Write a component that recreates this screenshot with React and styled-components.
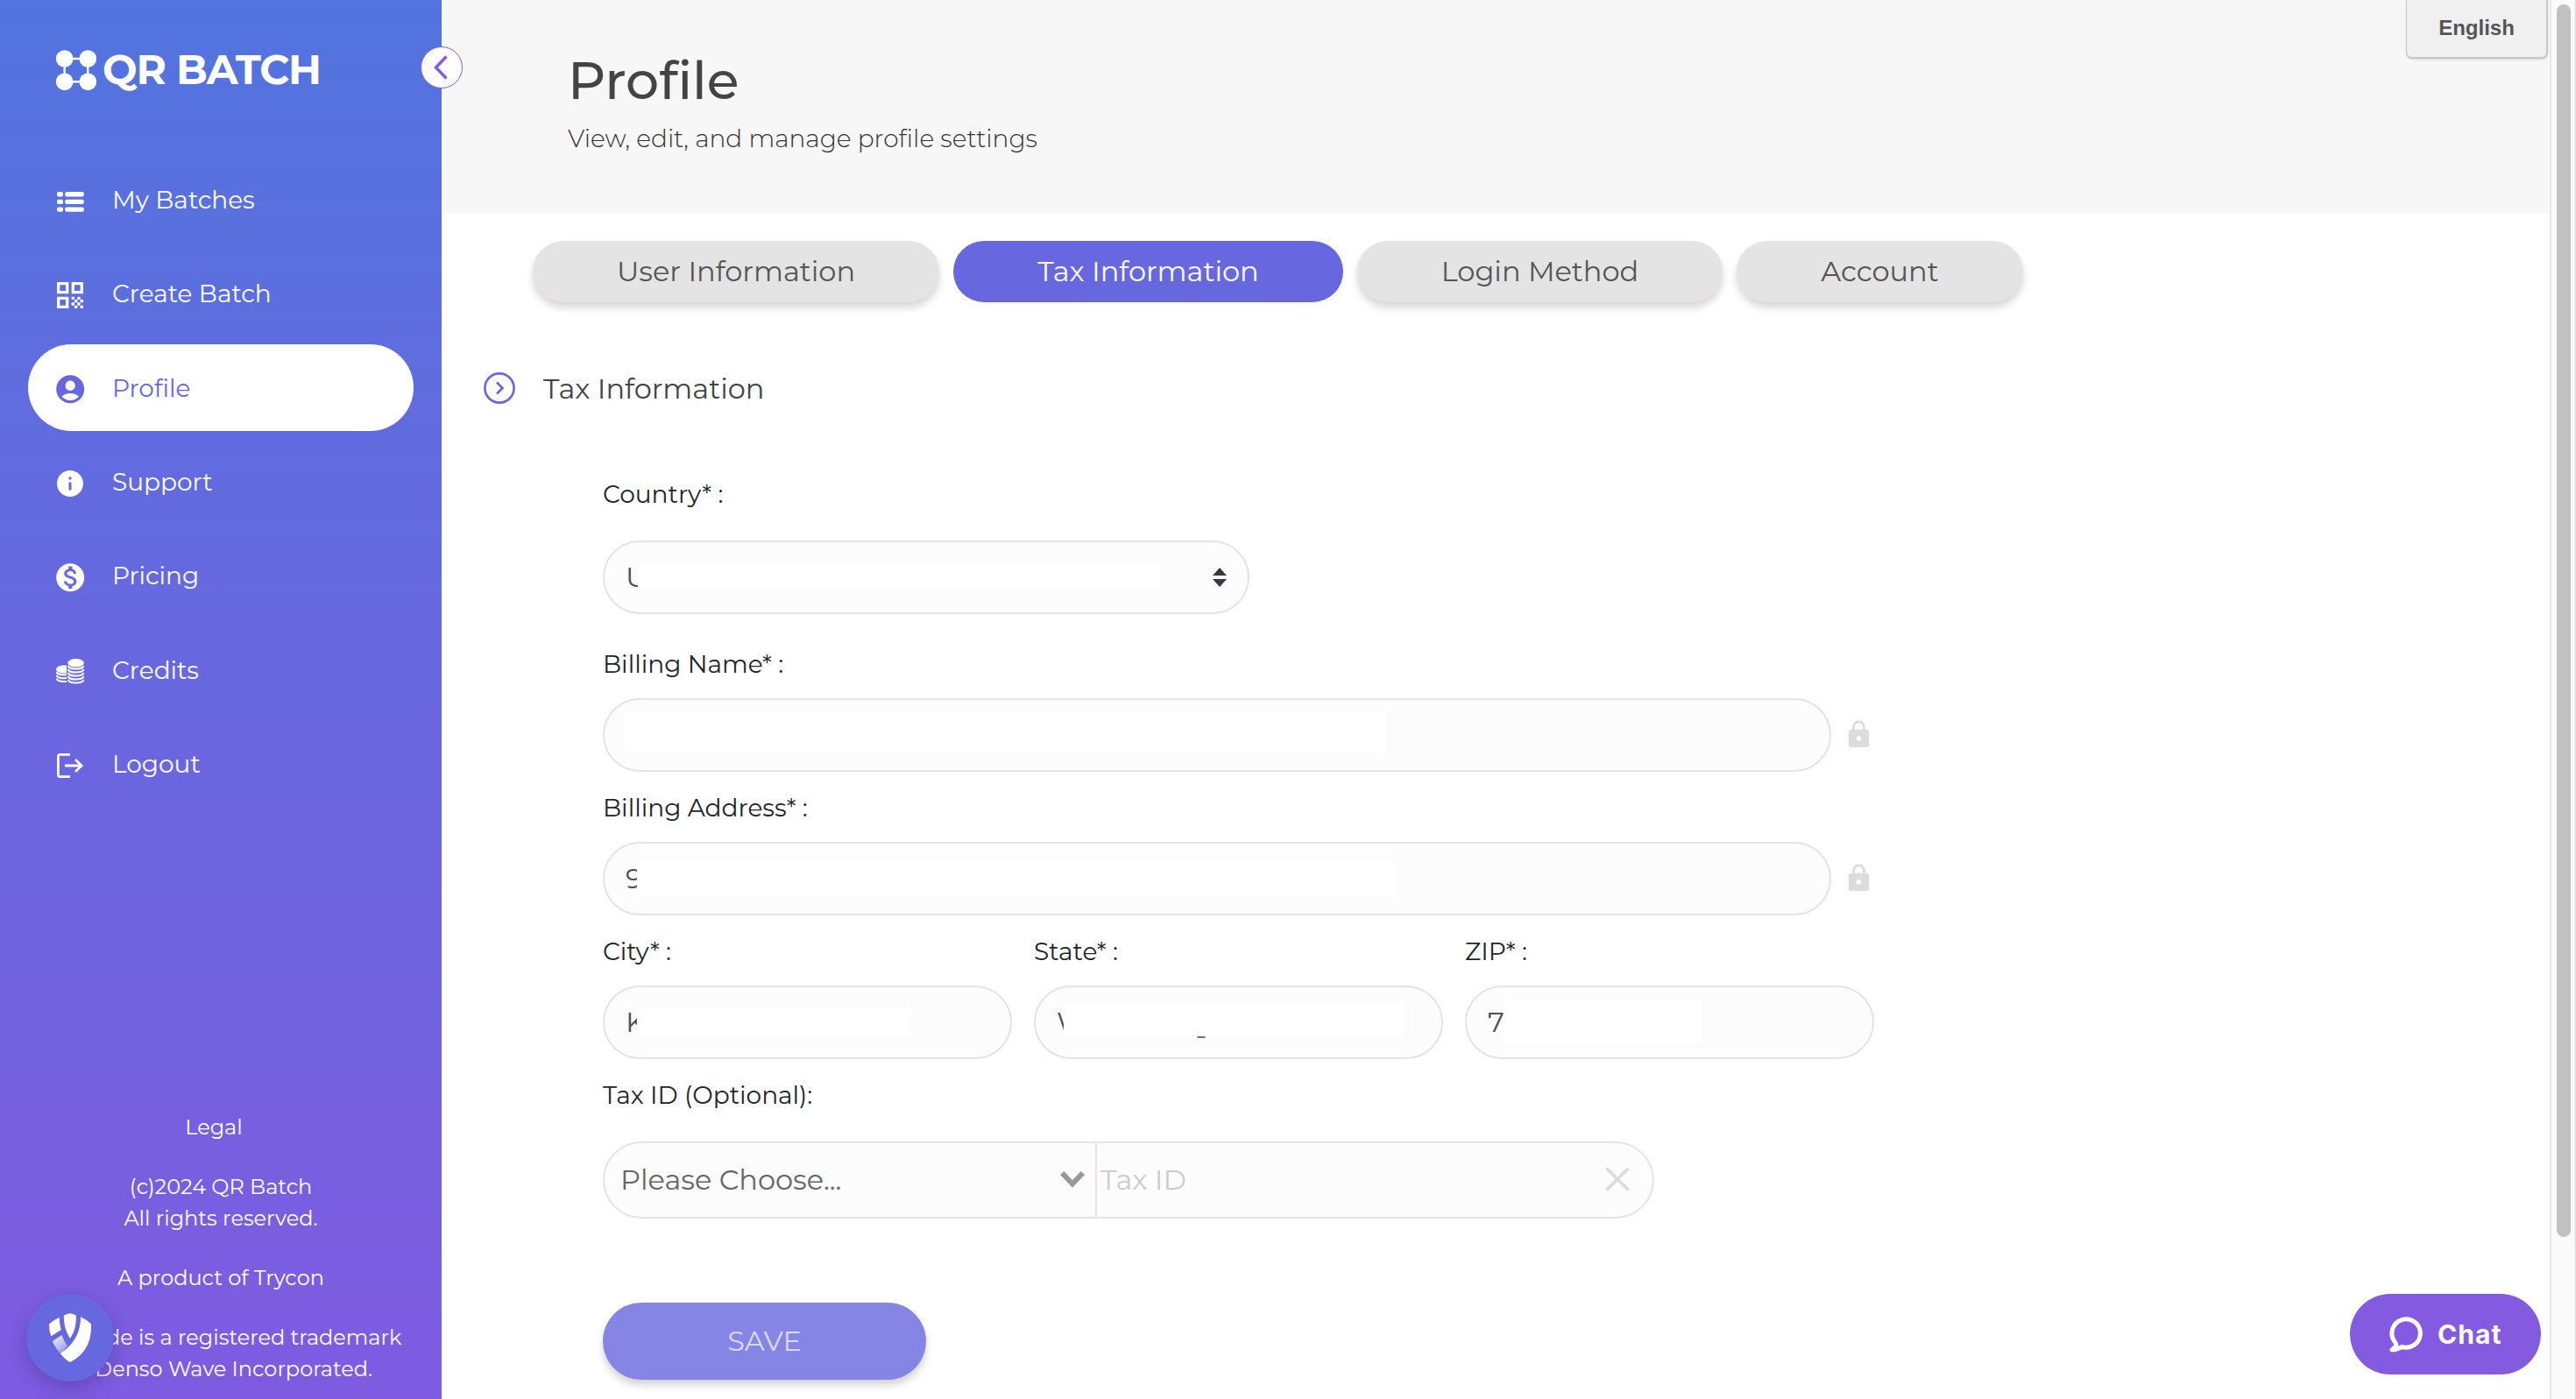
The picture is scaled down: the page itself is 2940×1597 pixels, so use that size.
import React, { useState } from 'react';
import styled, { createGlobalStyle } from 'styled-components';
import { MdQrCode, MdAccountCircle, MdInfo, MdMonetizationOn, MdLock } from 'react-icons/md';

const GlobalStyle = createGlobalStyle`
  * {
    box-sizing: border-box;
  }
  body {
    margin: 0;
    font-family: Montserrat, Inter, sans-serif;
    background-color: #fff;
  }
  button, input {
    font-family: inherit;
  }
`;

const Page = styled.div`
  position: relative;
  display: flex;
  height: 1597px;
  overflow: hidden;
`;

const Sidebar = styled.aside`
  position: relative;
  display: flex;
  flex-direction: column;
  width: 504px;
  padding: 56px 32px 0;
  color: #fff;
  background: linear-gradient(#5274df 0%, #626bdf 33%, #7e5be0 100%);
`;

const Logo = styled.div`
  display: flex;
  align-items: center;
  height: 48px;
  padding-left: 32px;
`;

const LogoText = styled.span`
  margin: 0 0 1px 7px;
  font-size: 47px;
  font-weight: 700;
  line-height: 48px;
  letter-spacing: -1.2px;
`;

const CollapseButton = styled.button`
  position: absolute;
  top: 53px;
  right: -24px;
  z-index: 2;
  display: flex;
  align-items: center;
  justify-content: center;
  width: 48px;
  height: 48px;
  padding: 0 2px 0 0;
  border: 1px solid #845be0;
  border-radius: 50%;
  background-color: #fff;
`;

const Nav = styled.nav`
  display: flex;
  flex-direction: column;
  gap: 8.3px;
  margin-top: 74.6px;
`;

const NavItem = styled.a`
  display: flex;
  align-items: center;
  gap: 28px;
  height: 99px;
  padding-left: 28px;
  border-radius: 50px;
  font-size: 28px;
  color: ${(props) => (props.$active ? '#6768df' : '#fff')};
  background-color: ${(props) => (props.$active ? '#fff' : 'transparent')};
`;

const NavIcon = styled.span`
  display: flex;
  align-items: center;
  justify-content: center;
  width: 40px;
  height: 40px;
  margin-top: 4px;
`;

const Footer = styled.footer`
  display: flex;
  flex-direction: column;
  gap: 32px;
  margin: 348px -20px 0;
  font-size: 24px;
  line-height: 36px;
  text-align: center;
  white-space: nowrap;

  p {
    margin: 0;
  }
  p:first-child {
    padding-right: 16px;
  }
`;

const PrivacyBadge = styled.button`
  position: absolute;
  left: 30px;
  bottom: 20px;
  display: flex;
  align-items: center;
  justify-content: center;
  width: 100px;
  height: 100px;
  padding: 0;
  border: none;
  border-radius: 50%;
  background-color: #6768df;
  box-shadow: 0 8px 20px rgba(60, 40, 120, 0.35);
`;

const Main = styled.main`
  flex: 1;
  background-color: #fff;
`;

const Header = styled.header`
  height: 243px;
  padding: 56px 0 0 144px;
  color: #444;
  background-color: #f7f7f7;
`;

const Title = styled.h1`
  margin: 0;
  font-size: 60px;
  font-weight: 500;
  line-height: 72px;
`;

const Subtitle = styled.p`
  margin: 13px 0 0;
  font-size: 28px;
  font-weight: 300;
  line-height: 34px;
  color: #333;
`;

const Tabs = styled.div`
  display: flex;
  gap: 16px;
  padding: 32px 0 0 104px;
`;

const Tab = styled.button`
  width: ${(props) => props.$width}px;
  height: 70px;
  padding: 0 0 2px;
  border: none;
  border-radius: 35px;
  font-size: 32px;
  color: ${(props) => (props.$active ? '#fff' : '#555')};
  background-color: ${(props) => (props.$active ? '#6768df' : '#e4e4e4')};
  box-shadow: ${(props) => (props.$active ? 'none' : '0 6px 8px rgba(40, 20, 20, 0.18)')};
`;

const SectionTitle = styled.h2`
  display: flex;
  align-items: center;
  gap: 32px;
  height: 40px;
  margin: 78px 0 0 48px;
  font-size: 32px;
  font-weight: 400;
  color: #444;
`;

const Form = styled.form`
  display: flex;
  flex-direction: column;
  padding: 84px 0 0 184px;
`;

const Field = styled.div`
  display: flex;
  flex-direction: column;
  gap: ${(props) => props.$gap || 20}px;
  margin-bottom: ${(props) => props.$bottom || 0}px;
`;

const Label = styled.label`
  height: 34px;
  font-size: 28px;
  line-height: 34px;
  color: #212529;
`;

const InputRow = styled.div`
  display: flex;
  align-items: center;
  gap: 14px;
  color: #dcdcdc;

  svg {
    margin-bottom: 1px;
  }
`;

const InputBox = styled.div`
  position: relative;
  display: flex;
  align-items: center;
  width: ${(props) => props.$width}px;
  height: 84px;
  padding: 0 24px 1px;
  border: 2px solid #e4e4e4;
  border-radius: 42px;
  font-size: 32px;
  color: #495057;
  background-color: #fcfcfc;
`;

// Blank strip that covers the stored value
const Redaction = styled.span`
  position: absolute;
  left: ${(props) => props.$left}px;
  top: ${(props) => props.$top}px;
  width: ${(props) => props.$width}px;
  height: ${(props) => props.$height}px;
  background-color: #fff;
`;

const Descender = styled.span`
  position: absolute;
  left: 184px;
  top: 56px;
  width: 10px;
  height: 2px;
  border-radius: 0 0 5px 5px;
  background-color: #6b7177;
`;

const SelectArrows = styled.svg`
  margin-left: auto;
`;

const Columns = styled.div`
  display: flex;
  gap: 25px;
`;

const TaxIdBox = styled.div`
  display: flex;
  width: 1200px;
  height: 88px;
  border: 2px solid #e4e4e4;
  border-radius: 44px;
  background-color: #fcfcfc;
`;

const TaxType = styled.div`
  display: flex;
  align-items: center;
  justify-content: space-between;
  width: 562px;
  padding: 0 12px 2px 18px;
  border-right: 2px solid #e4e4e4;
  font-size: 32px;
  color: #666;
`;

const TaxIdInput = styled.div`
  display: flex;
  flex: 1;
  align-items: center;
  justify-content: space-between;
  padding: 0 26px 2px 4px;
  font-size: 32px;
  color: #ccc;
`;

const SaveButton = styled.button`
  width: 369px;
  height: 88px;
  margin-top: 96px;
  padding: 0 0 2px;
  border: none;
  border-radius: 44px;
  font-size: 32px;
  color: #dadaf7;
  background-color: #8585e5;
  box-shadow: 0 6px 8px rgba(40, 20, 20, 0.2);
`;

const Language = styled.div`
  position: absolute;
  top: 0;
  right: 32px;
  width: 162px;
  height: 67px;
  border: solid #c8c8c8;
  border-width: 0 2px 2px 1px;
  border-radius: 0 0 7px 7px;
  font-family: 'Liberation Sans', Arial, sans-serif;
  font-size: 24px;
  font-weight: 700;
  line-height: 64px;
  text-align: center;
  color: #555;
  background-color: #f0f0f0;
  box-shadow: 0 1px 2px rgba(0, 0, 0, 0.15);
`;

const ChatButton = styled.button`
  position: absolute;
  right: 40px;
  bottom: 28px;
  display: flex;
  align-items: center;
  gap: 16px;
  width: 218px;
  height: 92px;
  padding: 0 0 0 44px;
  border: none;
  border-radius: 46px;
  font-family: Inter, sans-serif;
  font-size: 30px;
  font-weight: 700;
  letter-spacing: 1.1px;
  color: #fff;
  background-color: #845be0;
`;

const Scrollbar = styled.div`
  width: 30px;
  padding: 5px 4px 0 6px;
  border: solid #e9e9e9;
  border-width: 0 2px;
  background-color: #fafafa;
`;

const Thumb = styled.div`
  width: 16px;
  height: 1407px;
  border-radius: 8px;
  background-color: #c1c1c1;
`;

const LogoIcon = () => (
  <svg width="46" height="46" viewBox="0 0 46 46" fill="currentColor">
    <circle cx="9.7" cy="10" r="9.8" />
    <circle cx="36.3" cy="10" r="9.8" />
    <circle cx="9.7" cy="36.3" r="9.8" />
    <circle cx="36.3" cy="36.3" r="9.8" />
    <path d="M9.7 10H36.3V36.3H9.7Z" fill="none" stroke="currentColor" strokeWidth="2.4" />
  </svg>
);

const ListIcon = () => (
  <svg width="31" height="23" viewBox="0 0 31 23" fill="currentColor">
    {[0, 8.7, 17.4].map((y) => (
      <g key={y}>
        <rect x="0" y={y} width="7" height="5.4" rx="2" />
        <rect x="9.2" y={y} width="21.6" height="5.4" rx="2" />
      </g>
    ))}
  </svg>
);

const CoinsIcon = () => (
  <svg width="32" height="29" viewBox="0 0 32 29" fill="currentColor">
    <ellipse cx="22.6" cy="4.8" rx="9.3" ry="4.8" />
    <path d="M12 7.6C4.5 6.7 0 9.5 0 12.2C0 14.8 5 17 12 16.4Z" />
    <g fill="none" stroke="currentColor" strokeWidth="2">
      {[9, 13, 17, 21, 24.8].map((y) => (
        <path key={y} d={`M13.4 ${y - 1}C15.5 ${y + 3.8} 29.7 ${y + 3.8} 31.8 ${y - 1}`} />
      ))}
      {[17, 20.9, 24.7].map((y) => (
        <path key={y} d={`M0.3 ${y - 2}C1.5 ${y + 0.6} 6 ${y + 1.7} 12 ${y + 1.2}`} />
      ))}
    </g>
  </svg>
);

const LogoutIcon = () => (
  <svg width="30" height="28" viewBox="0 0 30 28" fill="none" stroke="currentColor" strokeWidth="2.8">
    <path d="M15 1.4H3.4Q1.4 1.4 1.4 3.4V24.6Q1.4 26.6 3.4 26.6H15" />
    <path d="M9 14H27M21 7L28 14L21 21" />
  </svg>
);

const ShieldIcon = () => (
  <svg width="48" height="56" viewBox="0 0 48 56" fill="#fff">
    <defs>
      <linearGradient id="fold" x1="0" y1="0" x2="0.5" y2="1">
        <stop offset="0" stopColor="#fff" stopOpacity="0.95" />
        <stop offset="1" stopColor="#fff" stopOpacity="0.35" />
      </linearGradient>
    </defs>
    <path d="M0 12.5Q5 7.5 11.9 5Q11.6 12.5 13.8 19L2.2 26.3Q0 20 0 12.5Z" />
    <path d="M16.9 2.7Q24 -2.4 30.9 2.7Q31.5 18 24 28.7Q16.5 18 16.9 2.7Z" />
    <path d="M36.1 4.3Q42.5 7.3 47.9 12.2Q49.5 43 24 56Q17.5 52.5 12.9 46Q36 31 36.1 4.3Z" />
    <path d="M4 32L14.4 25Q17 32 20.8 37Q18 42 12.9 46Q7 40 4 32Z" fill="url(#fold)" />
  </svg>
);

const ChatIcon = () => (
  <svg width="40" height="42" viewBox="0 0 40 42" fill="none" stroke="#fff" strokeWidth="5" strokeLinejoin="round">
    <path d="M14.5 35.2A16.2 16.2 0 1 0 7 29.5Q9.8 33 7.8 35.5L4 38.8Q8 39.3 14.5 35.8Q17 36.2 20 36.2" />
  </svg>
);

const navItems = [
  { label: 'My Batches', icon: <ListIcon /> },
  { label: 'Create Batch', icon: <MdQrCode size={40} /> },
  { label: 'Profile', icon: <MdAccountCircle size={38.4} /> },
  { label: 'Support', icon: <MdInfo size={36} /> },
  { label: 'Pricing', icon: <MdMonetizationOn size={38.4} /> },
  { label: 'Credits', icon: <CoinsIcon /> },
  { label: 'Logout', icon: <LogoutIcon /> },
];

const tabs = [
  { label: 'User Information', width: 464 },
  { label: 'Tax Information', width: 445 },
  { label: 'Login Method', width: 417 },
  { label: 'Account', width: 327 },
];

export default function App() {
  const [activeTab, setActiveTab] = useState('Tax Information');

  return (
    <Page>
      <GlobalStyle />
      <Sidebar>
        <Logo>
          <LogoIcon />
          <LogoText>QR BATCH</LogoText>
        </Logo>
        <CollapseButton aria-label="Collapse menu">
          <svg width="16" height="28" viewBox="0 0 16 28" fill="none" stroke="#845be0" strokeWidth="3.4">
            <path d="M14.5 1.5L2.5 14L14.5 26.5" />
          </svg>
        </CollapseButton>
        <Nav>
          {navItems.map((item) => (
            <NavItem key={item.label} $active={item.label === 'Profile'}>
              <NavIcon>{item.icon}</NavIcon>
              {item.label}
            </NavItem>
          ))}
        </Nav>
        <Footer>
          <p>Legal</p>
          <p>(c)2024 QR Batch<br />All rights reserved.</p>
          <p>A product of Trycon</p>
          <p>QR Code is a registered trademark<br />of Denso Wave Incorporated.</p>
        </Footer>
        <PrivacyBadge aria-label="Privacy settings">
          <ShieldIcon />
        </PrivacyBadge>
      </Sidebar>

      <Main>
        <Header>
          <Title>Profile</Title>
          <Subtitle>View, edit, and manage profile settings</Subtitle>
        </Header>
        <Tabs>
          {tabs.map((tab) => (
            <Tab
              key={tab.label}
              $width={tab.width}
              $active={tab.label === activeTab}
              onClick={() => setActiveTab(tab.label)}
            >
              {tab.label}
            </Tab>
          ))}
        </Tabs>

        <SectionTitle>
          <svg width="36" height="36" viewBox="0 0 36 36" fill="none" stroke="#6768df" strokeWidth="2.6">
            <circle cx="18" cy="18" r="16.6" />
            <path d="M15 11.5L21.5 18L15 24.5" />
          </svg>
          Tax Information
        </SectionTitle>

        <Form>
          <Field $gap={36} $bottom={40}>
            <Label>Country* :</Label>
            <InputBox $width={738}>
              U
              <Redaction $left={38} $top={26} $width={596} $height={27} />
              <SelectArrows width="16" height="22" viewBox="0 0 16 22" fill="#343a40">
                <path d="M0 9L8 0L16 9ZM0 13H16L8 22Z" />
              </SelectArrows>
            </InputBox>
          </Field>
          <Field $gap={22} $bottom={24}>
            <Label>Billing Name* :</Label>
            <InputRow>
              <InputBox $width={1402}>
                <Redaction $left={23} $top={13} $width={869} $height={46} />
              </InputBox>
              <MdLock size={35} />
            </InputRow>
          </Field>
          <Field $gap={22} $bottom={24}>
            <Label>Billing Address* :</Label>
            <InputRow>
              <InputBox $width={1402}>
                9
                <Redaction $left={37} $top={20} $width={865} $height={41} />
              </InputBox>
              <MdLock size={35} />
            </InputRow>
          </Field>
          <Columns>
            <Field $gap={22} $bottom={24}>
              <Label>City* :</Label>
              <InputBox $width={467}>
                K
                <Redaction $left={37} $top={22} $width={312} $height={35} />
              </InputBox>
            </Field>
            <Field $gap={22} $bottom={24}>
              <Label>State* :</Label>
              <InputBox $width={467}>
                W
                <Redaction $left={32} $top={17} $width={388} $height={39} />
                <Descender />
              </InputBox>
            </Field>
            <Field $gap={22} $bottom={24}>
              <Label>ZIP* :</Label>
              <InputBox $width={467}>
                7
                <Redaction $left={43} $top={15} $width={224} $height={49} />
              </InputBox>
            </Field>
          </Columns>
          <Field $gap={36}>
            <Label>Tax ID (Optional):</Label>
            <TaxIdBox>
              <TaxType>
                Please Choose...
                <svg width="28" height="20" viewBox="0 0 28 20" fill="none" stroke="#999" strokeWidth="6">
                  <path d="M2.2 3L14 15.5L25.8 3" />
                </svg>
              </TaxType>
              <TaxIdInput>
                Tax ID
                <svg width="28" height="28" viewBox="0 0 28 28" fill="none" stroke="#dcdcdc" strokeWidth="3.8">
                  <path d="M1.5 1.5L26.5 26.5M26.5 1.5L1.5 26.5" />
                </svg>
              </TaxIdInput>
            </TaxIdBox>
          </Field>
          <SaveButton type="button">SAVE</SaveButton>
        </Form>
      </Main>

      <Scrollbar>
        <Thumb />
      </Scrollbar>
      <Language>English</Language>
      <ChatButton>
        <ChatIcon />
        Chat
      </ChatButton>
    </Page>
  );
}
